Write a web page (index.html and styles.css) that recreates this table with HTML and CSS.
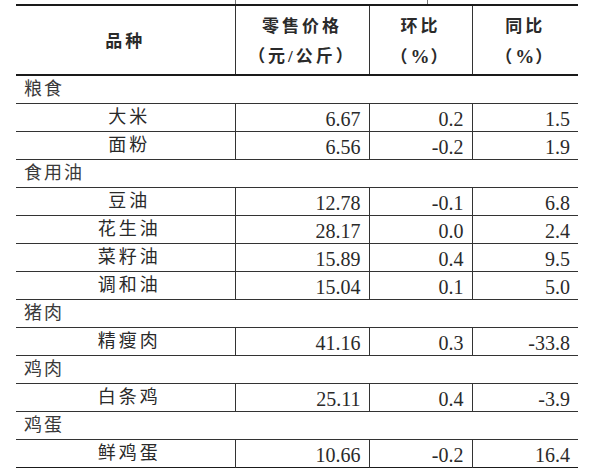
FILE: index.html
```html
<!DOCTYPE html>
<html lang="zh-CN">
<head>
<meta charset="utf-8">
<link rel="stylesheet" href="styles.css">
</head>
<body>
<div class="top-strip"><span class="tick tick-a"></span><span class="tick tick-b"></span></div>
<table class="price-table">
  <colgroup>
    <col class="c1"><col class="c2"><col class="c3"><col class="c4">
  </colgroup>
  <thead>
    <tr class="head">
      <th>品种</th>
      <th>零售价格<br>（元/公斤）</th>
      <th>环比<br>（<span class="pct">%</span>）</th>
      <th>同比<br>（<span class="pct">%</span>）</th>
    </tr>
  </thead>
  <tbody>
    <tr class="cat"><td colspan="4">粮食</td></tr>
    <tr><td class="name">大米</td><td class="num">6.67</td><td class="num">0.2</td><td class="num">1.5</td></tr>
    <tr><td class="name">面粉</td><td class="num">6.56</td><td class="num">-0.2</td><td class="num">1.9</td></tr>
    <tr class="cat"><td colspan="4">食用油</td></tr>
    <tr><td class="name">豆油</td><td class="num">12.78</td><td class="num">-0.1</td><td class="num">6.8</td></tr>
    <tr><td class="name">花生油</td><td class="num">28.17</td><td class="num">0.0</td><td class="num">2.4</td></tr>
    <tr><td class="name">菜籽油</td><td class="num">15.89</td><td class="num">0.4</td><td class="num">9.5</td></tr>
    <tr><td class="name">调和油</td><td class="num">15.04</td><td class="num">0.1</td><td class="num">5.0</td></tr>
    <tr class="cat"><td colspan="4">猪肉</td></tr>
    <tr><td class="name">精瘦肉</td><td class="num">41.16</td><td class="num">0.3</td><td class="num">-33.8</td></tr>
    <tr class="cat"><td colspan="4">鸡肉</td></tr>
    <tr><td class="name">白条鸡</td><td class="num">25.11</td><td class="num">0.4</td><td class="num">-3.9</td></tr>
    <tr class="cat"><td colspan="4">鸡蛋</td></tr>
    <tr><td class="name">鲜鸡蛋</td><td class="num">10.66</td><td class="num">-0.2</td><td class="num">16.4</td></tr>
  </tbody>
</table>
</body>
</html>
```
FILE: styles.css
```css
html, body {
  margin: 0;
  padding: 0;
  background: #ffffff;
}
body {
  font-family: "Liberation Serif", "Noto Sans CJK SC", serif;
  color: #2a2a2a;
}
.top-strip {
  height: 4px;
  position: relative;
}
.tick {
  position: absolute;
  top: 0;
  width: 1px;
  height: 4px;
  background: #777;
}
.tick-a { left: 235px; }
.tick-b { left: 427px; }
.price-table {
  margin-left: 16px;
  width: 562px;
  border-collapse: collapse;
  table-layout: fixed;
  border-top: 2px solid #1a1a1a;
  border-bottom: 1px solid #1a1a1a;
}
.c1 { width: 219px; }
.c2 { width: 134px; }
.c3 { width: 103px; }
.c4 { width: 106px; }
.head th {
  height: 64px;
  padding: 4px 0 0 0;
  font-weight: bold;
  font-size: 17px;
  line-height: 30px;
  letter-spacing: 3px;
  text-align: center;
  vertical-align: middle;
  border-bottom: 2px solid #1a1a1a;
  border-left: 1px solid #333;
  color: #2a2a2a;
}
.head th:first-child { border-left: none; }
.pct {
  font-size: 19px;
  letter-spacing: 1px;
}
tbody tr { height: 28px; }
tbody td {
  height: 27px;
  box-sizing: border-box;
  padding: 0;
  border-top: 1px solid #333;
  border-left: 1px solid #333;
  font-size: 18px;
  line-height: 20px;
  vertical-align: middle;
}
tbody td:first-child { border-left: none; }
.cat td {
  padding-left: 8px;
  letter-spacing: 2px;
  color: #3a3a3a;
}
.name {
  text-align: center;
  letter-spacing: 3px;
  padding-left: 8px;
}
.num {
  text-align: right;
  font-size: 20px;
  padding-right: 8px;
  padding-top: 3px;
}
```
